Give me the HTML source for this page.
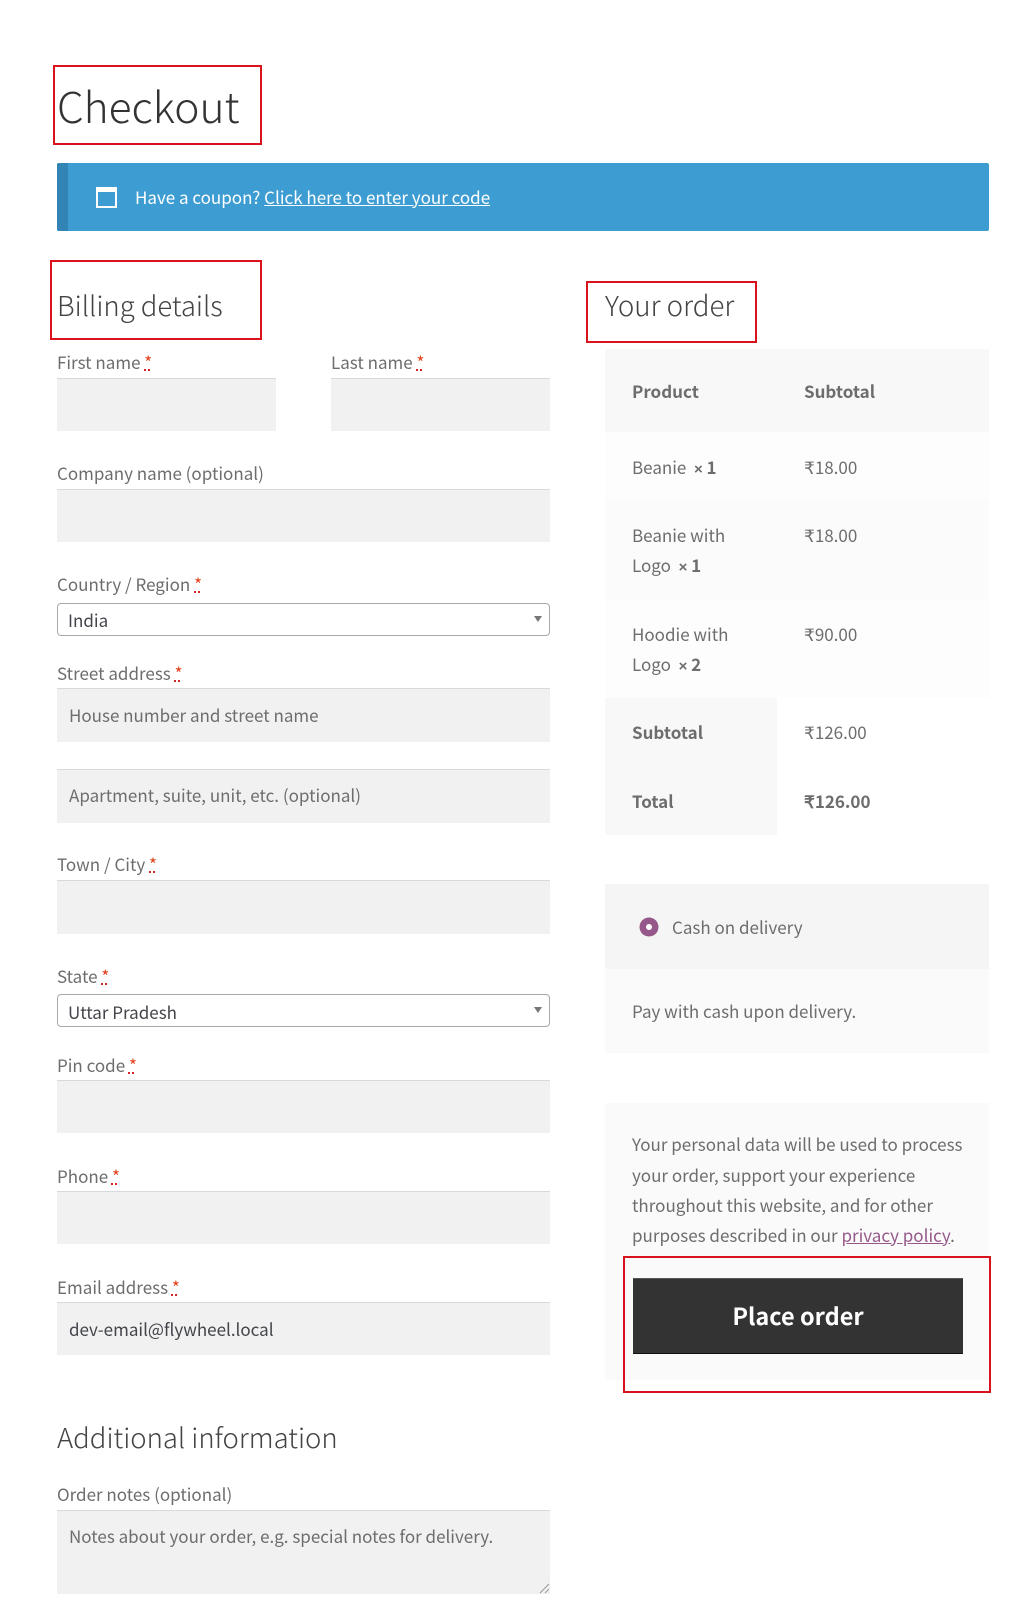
<!DOCTYPE html>
<html lang="en"><head><meta charset="utf-8"><title>Checkout</title>
<style>
html,body{margin:0;padding:0;background:#fff}
body{position:relative;width:1018px;height:1600px;overflow:hidden;font-family:"Noto Sans CJK JP","Liberation Sans",sans-serif;color:#6d6d6d}
.b{position:absolute;box-sizing:border-box}
.t{position:absolute;line-height:0;margin-top:-.436em;white-space:nowrap;font-size:17px;height:0}
.l{color:#6d6d6d}
.i{position:absolute;box-sizing:border-box;background:#f1f1f1;border-top:1px solid #d9d9d9;height:53px;left:57px;width:493px}
.s{position:absolute;box-sizing:border-box;left:57px;width:493px;height:33px;border:1px solid #a9a9a9;border-radius:4px;background:#fff}
.s:after{content:"";position:absolute;right:7px;top:12px;border-left:4.5px solid transparent;border-right:4.5px solid transparent;border-top:6px solid #777}
.r{position:absolute;box-sizing:border-box;border:2px solid #d9131c}
abbr{color:#e2401c;text-decoration:underline dotted #c00;font-size:17px}
.h{font-weight:300;color:#444;font-size:27.5px}
.v{color:#43454b}
.x{font-family:"Liberation Sans",sans-serif;font-size:15px;font-weight:700}
strong{font-weight:700}
</style></head><body>

<div class="r" style="left:53px;top:65px;width:209px;height:80px"></div>
<div class="t" style="left:57px;top:125px;font-size:42.5px;font-weight:200;color:#333">Checkout</div>

<div class="b" style="left:57px;top:163px;width:932px;height:68px;background:#3d9cd2;border-radius:2px"></div>
<div class="b" style="left:57px;top:163px;width:11px;height:68px;background:#3184b4;border-radius:2px 0 0 2px"></div>
<svg class="b" style="left:96px;top:187px" width="21" height="21" viewBox="0 0 21 21"><rect x="1" y="1" width="19" height="19" fill="none" stroke="#fff" stroke-width="2"/><rect x="1" y="1" width="19" height="4" fill="#fff"/></svg>
<div class="t" style="left:135px;top:204px;color:#fff">Have a coupon? <span style="text-decoration:underline">Click here to enter your code</span></div>

<div class="r" style="left:50px;top:260px;width:212px;height:80px"></div>
<div class="t h" style="left:57px;top:316px">Billing details</div>

<div class="t l" style="left:57px;top:369px">First name <abbr>*</abbr></div>
<div class="i" style="top:378px;width:219px"></div>
<div class="t l" style="left:331px;top:369px">Last name <abbr>*</abbr></div>
<div class="i" style="left:331px;top:378px;width:219px"></div>

<div class="t l" style="left:57px;top:480px">Company name (optional)</div>
<div class="i" style="top:489px"></div>

<div class="t l" style="left:57px;top:591px">Country / Region <abbr>*</abbr></div>
<div class="s" style="top:603px"></div>
<div class="t v" style="left:68px;top:627px">India</div>

<div class="t l" style="left:57px;top:680px">Street address <abbr>*</abbr></div>
<div class="i" style="top:688px;height:54px"></div>
<div class="t l" style="left:69px;top:722px">House number and street name</div>
<div class="i" style="top:769px;height:54px"></div>
<div class="t l" style="left:69px;top:802px">Apartment, suite, unit, etc. (optional)</div>

<div class="t l" style="left:57px;top:871px">Town / City <abbr>*</abbr></div>
<div class="i" style="top:880px;height:54px"></div>

<div class="t l" style="left:57px;top:983px">State <abbr>*</abbr></div>
<div class="s" style="top:994px"></div>
<div class="t v" style="left:68px;top:1019px">Uttar Pradesh</div>

<div class="t l" style="left:57px;top:1072px">Pin code <abbr>*</abbr></div>
<div class="i" style="top:1080px"></div>

<div class="t l" style="left:57px;top:1183px">Phone <abbr>*</abbr></div>
<div class="i" style="top:1191px"></div>

<div class="t l" style="left:57px;top:1294px">Email address <abbr>*</abbr></div>
<div class="i" style="top:1302px"></div>
<div class="t v" style="left:69px;top:1336px">dev-email@flywheel.local</div>

<div class="t h" style="left:57px;top:1448px">Additional information</div>

<div class="t l" style="left:57px;top:1501px">Order notes (optional)</div>
<div class="i" style="top:1510px;height:84px"></div>
<div class="t l" style="left:69px;top:1543px">Notes about your order, e.g. special notes for delivery.</div>
<svg class="b" style="left:538px;top:1582px" width="12" height="12" viewBox="0 0 12 12"><path d="M2 11 11 2M7 11 11 7" stroke="#999" stroke-width="1" fill="none"/></svg>

<div class="r" style="left:586px;top:281px;width:171px;height:62px"></div>
<div class="t h" style="left:605px;top:316px;font-size:27.7px">Your order</div>

<div class="b" style="left:605px;top:349px;width:384px;height:83px;background:#f8f8f8"></div>
<div class="b" style="left:605px;top:432px;width:384px;height:69px;background:#fdfdfd"></div>
<div class="b" style="left:605px;top:501px;width:384px;height:98px;background:#fbfbfb"></div>
<div class="b" style="left:605px;top:599px;width:384px;height:99px;background:#fdfdfd"></div>
<div class="b" style="left:605px;top:698px;width:172px;height:137px;background:#f8f8f8"></div>

<div class="t" style="left:632px;top:398px;font-weight:700">Product</div>
<div class="t" style="left:804px;top:398px;font-weight:700">Subtotal</div>
<div class="t" style="left:632px;top:474px">Beanie&nbsp; <span class="x">×</span> <strong>1</strong></div>
<div class="t" style="left:804px;top:474px">₹18.00</div>
<div class="t" style="left:632px;top:542px">Beanie with</div>
<div class="t" style="left:632px;top:572px">Logo&nbsp; <span class="x">×</span> <strong>1</strong></div>
<div class="t" style="left:804px;top:542px">₹18.00</div>
<div class="t" style="left:632px;top:641px">Hoodie with</div>
<div class="t" style="left:632px;top:671px">Logo&nbsp; <span class="x">×</span> <strong>2</strong></div>
<div class="t" style="left:804px;top:641px">₹90.00</div>
<div class="t" style="left:632px;top:739px;font-weight:700">Subtotal</div>
<div class="t" style="left:804px;top:739px">₹126.00</div>
<div class="t" style="left:632px;top:808px;font-weight:700">Total</div>
<div class="t" style="left:804px;top:808px;font-weight:700">₹126.00</div>

<div class="b" style="left:605px;top:884px;width:384px;height:85px;background:#f5f5f5"></div>
<div class="b" style="left:605px;top:969px;width:384px;height:84px;background:#fafafa"></div>
<svg class="b" style="left:638px;top:916px" width="22" height="22" viewBox="0 0 22 22"><circle cx="11" cy="11" r="9.5" fill="#96588a"/><circle cx="11" cy="11" r="3" fill="#fff"/></svg>
<div class="t" style="left:672px;top:934px">Cash on delivery</div>
<div class="t" style="left:632px;top:1018px">Pay with cash upon delivery.</div>

<div class="b" style="left:605px;top:1103px;width:384px;height:277px;background:#fafafa"></div>
<div class="t" style="left:632px;top:1151px">Your personal data will be used to process</div>
<div class="t" style="left:632px;top:1182px">your order, support your experience</div>
<div class="t" style="left:632px;top:1212px">throughout this website, and for other</div>
<div class="t" style="left:632px;top:1242px">purposes described in our <span style="color:#96588a;text-decoration:underline">privacy policy</span>.</div>

<div class="b" style="left:633px;top:1278px;width:330px;height:76px;background:#333;border-top:1px solid #555;border-bottom:1px solid #111"></div>
<div class="t" style="left:633px;width:330px;text-align:center;top:1325px;color:#fff;font-size:23.5px;font-weight:700">Place order</div>
<div class="r" style="left:623px;top:1256px;width:368px;height:137px"></div>
</body></html>
